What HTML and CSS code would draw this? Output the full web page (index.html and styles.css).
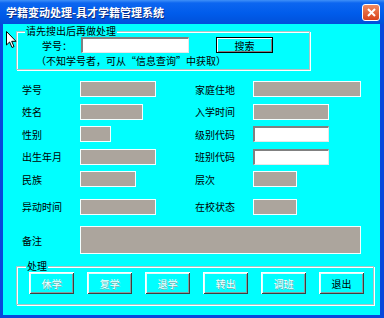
FILE: index.html
```html
<!DOCTYPE html>
<html lang="zh-CN">
<head>
  <meta charset="UTF-8" />
  <title>学籍变动处理</title>
  <link rel="stylesheet" href="styles.css">
</head>
<body>
  <div class="window">
    <div class="titlebar">
      <span class="title">学籍变动处理-具才学籍管理系统</span>
      <span class="close">
        <svg width="11" height="11" viewBox="0 0 11 11"><path d="M2 2 L9 9 M9 2 L2 9" stroke="#fff" stroke-width="2"/></svg>
      </span>
    </div>

    <div class="client">
      <div class="group search-group">
        <span class="legend">请先搜出后再做处理</span>
        <div class="search-row">
          <span class="search-label">学号：</span>
          <span class="input white search-input"></span>
          <button class="btn-search">搜索</button>
        </div>
        <div class="hint"><span class="paren">（</span>不知学号者，可从“信息查询”中获取<span class="paren">）</span></div>
      </div>

      <div class="form">
        <div class="row">
          <div class="cell left"><span class="label">学号</span><span class="field" style="width:76px"></span></div>
          <div class="cell"><span class="label">家庭住地</span><span class="field" style="width:108px"></span></div>
        </div>
        <div class="row">
          <div class="cell left"><span class="label">姓名</span><span class="field" style="width:63px"></span></div>
          <div class="cell"><span class="label">入学时间</span><span class="field" style="width:76px"></span></div>
        </div>
        <div class="row">
          <div class="cell left"><span class="label">性别</span><span class="field" style="width:31px"></span></div>
          <div class="cell"><span class="label">级别代码</span><span class="input white" style="width:76px"></span></div>
        </div>
        <div class="row">
          <div class="cell left"><span class="label">出生年月</span><span class="field" style="width:76px"></span></div>
          <div class="cell"><span class="label">班别代码</span><span class="input white" style="width:76px"></span></div>
        </div>
        <div class="row">
          <div class="cell left"><span class="label">民族</span><span class="field" style="width:56px"></span></div>
          <div class="cell"><span class="label">层次</span><span class="field" style="width:44px"></span></div>
        </div>
        <div class="row row-gap">
          <div class="cell left"><span class="label">异动时间</span><span class="field" style="width:76px"></span></div>
          <div class="cell"><span class="label">在校状态</span><span class="field" style="width:44px"></span></div>
        </div>
        <div class="row row-note">
          <span class="label">备注</span><span class="field note"></span>
        </div>
      </div>

      <div class="group action-group">
        <span class="legend">处理</span>
        <div class="buttons">
          <button class="btn disabled">休学</button>
          <button class="btn disabled">复学</button>
          <button class="btn disabled">退学</button>
          <button class="btn disabled">转出</button>
          <button class="btn disabled">调班</button>
          <button class="btn">退出</button>
        </div>
      </div>
    </div>

    <svg class="cursor" width="12" height="18" viewBox="0 0 12 18">
      <path d="M0.5 0.5 L0.5 14 L3.6 11 L6 16.5 L8 15.6 L5.7 10.3 L10 10.3 Z" fill="#fff" stroke="#000" stroke-width="1"/>
    </svg>
  </div>
</body>
</html>
```

FILE: styles.css
```css
body {
  margin: 0;
  font-family: "Noto Sans CJK SC", "Noto Sans", sans-serif;
  font-size: 10px;
  color: #000;
}

.window {
  position: relative;
  width: 384px;
  height: 318px;
  box-sizing: border-box;
  background-color: #0848dc;
  padding: 0 4px 3px 3px;
  display: flex;
  flex-direction: column;
}

.titlebar {
  height: 24px;
  margin: 0 -4px 0 -3px;
  padding: 0 4px 0 6px;
  background: linear-gradient(#3f90f8 0, #0c66f0 3px, #005ceb 55%, #0050da 100%);
  display: flex;
  align-items: center;
  justify-content: space-between;
}

.title {
  color: #fff;
  font-size: 11px;
  font-weight: bold;
  text-shadow: 1px 1px #0a2a80;
}

.close {
  width: 16px;
  height: 15px;
  border: 1px solid #fff;
  border-radius: 3px;
  background: linear-gradient(#f08a60, #d9431c);
  display: flex;
  align-items: center;
  justify-content: center;
}

.client {
  flex: 1;
  background-color: #00ffff;
  padding: 7px 0 0 0;
}

.group {
  position: relative;
  box-sizing: border-box;
  height: 39px;
  margin-left: 13px;
  border: 1px solid #a8c4c4;
  box-shadow: inset 1px 1px #fff, 1px 1px #fff;
}

.legend {
  position: absolute;
  top: -7px;
  line-height: 12px;
  padding: 0 1px;
  background-color: #00ffff;
}

.search-group {
  width: 294px;
}

.search-group .legend {
  left: 8px;
}

.search-row {
  display: flex;
  align-items: center;
  height: 16px;
  margin-top: 5px;
  padding-left: 25px;
}

.search-label {
  width: 39px;
}

.search-input {
  width: 108px;
}

.btn-search {
  margin-left: 27px;
  width: 57px;
  height: 16px;
  padding: 0;
  font: inherit;
  background-color: #00ffff;
  border: 1px solid #000;
  box-shadow: inset 1px 1px #fff, inset -1px -1px #808080;
}

.hint {
  display: flex;
  margin-top: 2px;
  padding-left: 19px;
  line-height: 12px;
}

.paren {
  display: inline-block;
  width: 10px;
  text-align: center;
}

.input {
  display: block;
  box-sizing: border-box;
  height: 16px;
}

.white {
  background-color: #fff;
  border-top: 2px solid #808080;
  border-left: 2px solid #808080;
  border-bottom: 1px solid #e8e8e8;
  border-right: 1px solid #e8e8e8;
}

.form {
  padding: 8px 0 0 19px;
}

.row {
  display: flex;
  align-items: center;
  height: 22.5px;
}

.row-gap {
  margin-top: 5px;
}

.row-note {
  margin-top: 8px;
  height: 28px;
}

.cell {
  display: flex;
  align-items: center;
}

.cell.left {
  width: 173px;
}

.label {
  width: 58px;
}

.field {
  display: block;
  box-sizing: border-box;
  height: 16px;
  background-color: #aca59d;
  border: 1px solid #f4ffff;
}

.field.note {
  width: 281px;
  height: 28px;
}

.action-group {
  width: 358px;
  margin-top: 12px;
}

.action-group .legend {
  left: 9px;
}

.buttons {
  display: flex;
  gap: 13px;
  padding: 5px 0 0 12px;
}

.btn {
  width: 45px;
  height: 22px;
  padding: 0;
  font: inherit;
  background-color: #00ffff;
  border: none;
  box-shadow: inset 1px 1px #fff, inset -1px -1px #404040, inset 2px 2px #e0ffff, inset -2px -2px #80a0a0;
}

.btn.disabled {
  color: #f4ffff;
  text-shadow: 1px 1px #90b0b0;
}

.cursor {
  position: absolute;
  left: 6px;
  top: 31px;
}
```
